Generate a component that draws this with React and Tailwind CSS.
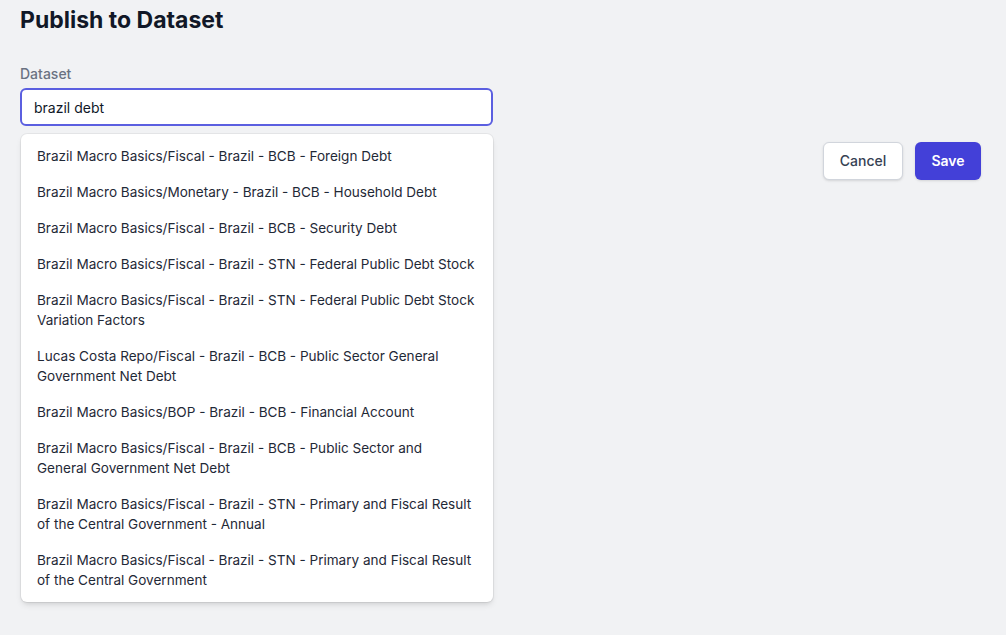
import React, { useState } from "react";

const results = [
  "Brazil Macro Basics/Fiscal - Brazil - BCB - Foreign Debt",
  "Brazil Macro Basics/Monetary - Brazil - BCB - Household Debt",
  "Brazil Macro Basics/Fiscal - Brazil - BCB - Security Debt",
  "Brazil Macro Basics/Fiscal - Brazil - STN - Federal Public Debt Stock",
  "Brazil Macro Basics/Fiscal - Brazil - STN - Federal Public Debt Stock Variation Factors",
  "Lucas Costa Repo/Fiscal - Brazil - BCB - Public Sector General Government Net Debt",
  "Brazil Macro Basics/BOP - Brazil - BCB - Financial Account",
  "Brazil Macro Basics/Fiscal - Brazil - BCB - Public Sector and General Government Net Debt",
  "Brazil Macro Basics/Fiscal - Brazil - STN - Primary and Fiscal Result of the Central Government - Annual",
  "Brazil Macro Basics/Fiscal - Brazil - STN - Primary and Fiscal Result of the Central Government",
];

export default function App() {
  const [query, setQuery] = useState("brazil debt");

  return (
    <div className="min-h-[635px] bg-[#f1f2f4] pl-5 pr-[25px] pt-1 font-['Inter',sans-serif] text-gray-900">
      <h1 className="text-[23px] font-bold leading-8 text-[#111827]">Publish to Dataset</h1>

      <div className="mt-7 w-[473px]">
        <label className="block text-sm font-medium leading-5 text-gray-500">Dataset</label>
        <div className="relative mt-1">
          <input
            value={query}
            onChange={(e) => setQuery(e.target.value)}
            autoFocus
            className="h-[38px] w-full rounded-md border-2 border-[#5b5fe0] bg-white px-3 text-sm text-gray-900 outline-none"
          />
          {/* Results */}
          <ul className="absolute left-px right-0 top-[46px] z-10 rounded-md bg-white py-1 shadow-md ring-1 ring-black/5">
            {results.map((r) => (
              <li key={r} className="py-2 pl-4 pr-[17.5px] text-[13.55px] leading-5 text-[#1f2937]">
                {r}
              </li>
            ))}
          </ul>
        </div>
      </div>

      {/* Actions */}
      <div className="mt-4 flex justify-end gap-3">
        <button className="h-[38px] w-20 rounded-md border border-gray-300 bg-white text-sm font-medium text-gray-700 shadow-sm">
          Cancel
        </button>
        <button className="h-[38px] w-[66px] rounded-md bg-[#4340d8] text-sm font-semibold text-white shadow-sm">
          Save
        </button>
      </div>
    </div>
  );
}
